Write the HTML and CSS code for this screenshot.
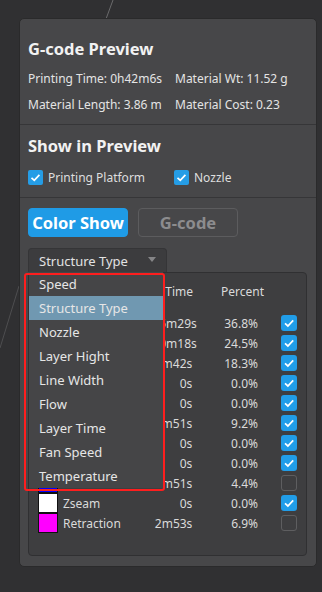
FILE: index.html
```html
<!DOCTYPE html>
<html lang="en">

<head>
    <meta charset="UTF-8">
    <meta name="viewport" content="width=device-width, initial-scale=1.0">
    <title>G-code Preview</title>
    <link rel="stylesheet" href="styles.css">
</head>

<body>
    <div class="scene">
        <!-- edges of the 3d view behind the panel -->
        <svg class="scene-lines" width="322" height="592" viewBox="0 0 322 592">
            <line x1="113" y1="0" x2="106" y2="19" stroke="#6b6b6d" stroke-width="1" />
            <line x1="0" y1="348" x2="19" y2="286" stroke="#4e4e50" stroke-width="1" />
        </svg>

        <div class="panel">
            <section class="block summary">
                <h2 class="block-title">G-code Preview</h2>
                <div class="info-grid">
                    <span>Printing Time: 0h42m6s</span>
                    <span>Material Wt: 11.52 g</span>
                    <span>Material Length: 3.86 m</span>
                    <span>Material Cost: 0.23</span>
                </div>
            </section>

            <section class="block show">
                <h2 class="block-title">Show in Preview</h2>
                <div class="check-row">
                    <label class="check check-wide"><span class="box on"><svg width="15" height="15" viewBox="0 0 15 15"><polyline points="3.5,7.8 6.3,10.4 11.4,4.9" fill="none" stroke="#fff" stroke-width="1.7" /></svg></span>Printing Platform</label>
                    <label class="check"><span class="box on"><svg width="15" height="15" viewBox="0 0 15 15"><polyline points="3.5,7.8 6.3,10.4 11.4,4.9" fill="none" stroke="#fff" stroke-width="1.7" /></svg></span>Nozzle</label>
                </div>
            </section>

            <section class="block legend">
                <div class="tabs">
                    <button class="tab active">Color Show</button>
                    <button class="tab">G-code</button>
                </div>

                <div class="select-wrap">
                    <div class="select">Structure Type<span class="caret"></span></div>
                    <ul class="select-menu">
                        <li>Speed</li>
                        <li class="current">Structure Type</li>
                        <li>Nozzle</li>
                        <li>Layer Hight</li>
                        <li>Line Width</li>
                        <li>Flow</li>
                        <li>Layer Time</li>
                        <li>Fan Speed</li>
                        <li>Temperature</li>
                    </ul>
                    <div class="mark"></div>
                </div>

                <div class="table">
                    <div class="thead">
                        <span class="c-type"></span>
                        <span class="c-time">Time</span>
                        <span class="c-pct">Percent</span>
                    </div>
                    <div class="tbody"></div>
                </div>
            </section>
        </div>
    </div>

    <script>
        // names of the rows under the open menu are not drawn
        var rows = [
            { name: "", color: "#ff7f00", time: "15m29s", pct: "36.8%", on: true },
            { name: "", color: "#00ff00", time: "10m18s", pct: "24.5%", on: true },
            { name: "", color: "#c00000", time: "7m42s", pct: "18.3%", on: true },
            { name: "", color: "#00ffff", time: "0s", pct: "0.0%", on: true },
            { name: "", color: "#008080", time: "0s", pct: "0.0%", on: true },
            { name: "", color: "#ffff00", time: "3m51s", pct: "9.2%", on: true },
            { name: "", color: "#8000ff", time: "0s", pct: "0.0%", on: true },
            { name: "", color: "#804000", time: "0s", pct: "0.0%", on: true },
            { name: "", color: "#0000ff", time: "1m51s", pct: "4.4%", on: false },
            { name: "Zseam", color: "#ffffff", time: "0s", pct: "0.0%", on: true },
            { name: "Retraction", color: "#ff00ff", time: "2m53s", pct: "6.9%", on: false }
        ];

        var tick = '<svg width="16" height="16" viewBox="0 0 16 16"><polyline points="4,8.4 6.9,11 12.2,5.4" fill="none" stroke="#fff" stroke-width="1.7" /></svg>';
        var tbody = document.querySelector('.tbody');
        var html = '';
        for (var i = 0; i < rows.length; i++) {
            var r = rows[i];
            html += `<div class="trow">
                <span class="swatch" style="background:${r.color}"></span>
                <span class="c-name">${r.name}</span>
                <span class="c-time">${r.time}</span>
                <span class="c-pct">${r.pct}</span>
                <span class="tbox ${r.on ? 'on' : ''}">${r.on ? tick : ''}</span>
            </div>`;
        }
        tbody.innerHTML = html;
    </script>
</body>

</html>
```

FILE: styles.css
```css
* {
    box-sizing: border-box;
}

body {
    margin: 0;
    background: #303032;
    font-family: "Noto Sans", "Noto Sans CJK SC", sans-serif;
    color: #e4e4e4;
}

.scene {
    position: relative;
    width: 322px;
    height: 592px;
    overflow: hidden;
    padding: 18px 0 0 19px;
}

.scene-lines {
    position: absolute;
    left: 0;
    top: 0;
}

.panel {
    position: relative;
    width: 298px;
    height: 549px;
    background: #474749;
    border: 1px solid #2a2a2b;
    border-radius: 5px;
}

.block {
    padding: 0 9px 0 8px;
    border-bottom: 1px solid #363638;
}

.block-title {
    margin: 0;
    font-size: 16.5px;
    font-weight: 700;
    line-height: 24px;
    color: #f2f2f2;
}

/* summary */
.summary {
    padding-top: 18px;
    padding-bottom: 6px;
}

.info-grid {
    margin-top: 5px;
    display: grid;
    grid-template-columns: 147px 1fr;
    font-size: 12px;
    line-height: 26px;
}

/* show in preview */
.show {
    padding-top: 9px;
    padding-bottom: 9px;
}

.check-row {
    margin-top: 8px;
    display: flex;
    height: 22px;
    align-items: center;
    font-size: 12px;
    color: #dedede;
}

.check {
    display: flex;
    align-items: center;
}

.check-wide {
    width: 146px;
}

.box {
    width: 15px;
    height: 15px;
    margin-right: 5px;
    border-radius: 2px;
    display: flex;
}

.box.on {
    background: #259de6;
}

/* legend */
.legend {
    padding-top: 10px;
    padding-bottom: 10px;
    border-bottom: 0;
}

.tabs {
    display: flex;
    gap: 10px;
}

.tab {
    width: 100px;
    height: 29px;
    padding: 0;
    border-radius: 4px;
    border: 1px solid #5c5c5e;
    background: transparent;
    font-family: inherit;
    font-size: 16.5px;
    font-weight: 700;
    white-space: nowrap;
    color: #8c8c8e;
}

.tab.active {
    background: #1f9be6;
    border-color: #1f9be6;
    color: #fff;
}

.select-wrap {
    position: relative;
    margin-top: 11px;
    width: 139px;
    height: 24px;
}

.select {
    height: 24px;
    display: flex;
    align-items: center;
    padding-left: 10px;
    background: #3c3c3e;
    border: 1px solid #353537;
    border-bottom: 0;
    border-radius: 4px 4px 0 0;
    font-size: 13px;
    color: #e2e2e2;
}

.caret {
    margin-left: auto;
    margin-right: 10px;
    border: 4px solid transparent;
    border-top: 5px solid #858587;
    border-bottom: 0;
    margin-top: -2px;
}

.select-menu {
    position: absolute;
    z-index: 2;
    left: 1px;
    top: 24px;
    width: 134px;
    margin: 0;
    padding: 0;
    list-style: none;
    background: #454547;
    font-size: 13px;
    color: #e6e6e6;
}

.select-menu li {
    height: 24px;
    line-height: 24px;
    padding-left: 10px;
}

.select-menu li.current {
    background: #7098b1;
}

.mark {
    position: absolute;
    z-index: 3;
    left: -4px;
    top: 25px;
    width: 141px;
    height: 218px;
    border: 2px solid #fe1e1e;
    border-radius: 3px;
}

.table {
    height: 284px;
    background: #3e3e40;
    border: 1px solid #303032;
    border-radius: 4px;
    padding: 7px 9px 0 9px;
    font-size: 12px;
    color: #dadada;
}

.thead {
    display: flex;
    line-height: 24px;
}

.thead .c-type {
    width: 115px;
}

.thead .c-time {
    width: 40px;
    text-align: right;
}

.thead .c-pct {
    width: 71px;
    text-align: right;
}

.tbody {
    margin-top: 9px;
}

.trow {
    display: flex;
    align-items: center;
    height: 20px;
}

.swatch {
    width: 20px;
    height: 20px;
    border: 1px solid #111;
}

.trow .c-name {
    width: 90px;
    margin-left: 5px;
}

.trow .c-time {
    width: 40px;
    text-align: right;
}

.trow .c-pct {
    width: 66px;
    text-align: right;
}

.tbox {
    width: 16px;
    height: 16px;
    margin-left: 23px;
    border-radius: 3px;
    border: 1px solid #5e5e60;
    display: flex;
}

.tbox.on {
    border: 0;
    background: #219de8;
}
```
